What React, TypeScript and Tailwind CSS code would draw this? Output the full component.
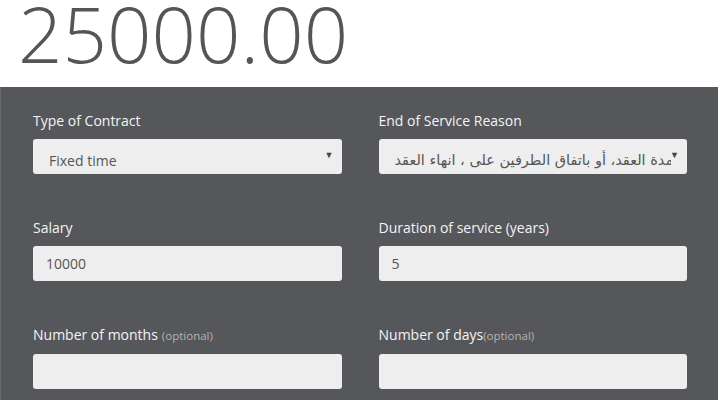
const font = { fontFamily: '"Open Sans", "Noto Sans", sans-serif' };

function Field({ label, optional, tight, children }: { label: string; optional?: boolean; tight?: boolean; children: React.ReactNode }) {
  return (
    <div className="flex flex-col">
      <label className="text-[14px] leading-5 text-[#f4f4f4]">
        {label}
        {optional && <span className={`text-[11.5px] text-[#b4b4b4] ${tight ? "" : "ml-1"}`}>(optional)</span>}
      </label>
      <div className="mt-2">{children}</div>
    </div>
  );
}

function FakeSelect({ children }: { children: React.ReactNode }) {
  return (
    <div className="relative flex h-[35px] items-center rounded-[3px] bg-[#eeeeee] pl-4 pr-[16px] pt-2 text-[14px] text-[#555555]">
      <div dir="ltr" className="min-w-0 flex-1 overflow-hidden whitespace-nowrap text-left">
        {children}
      </div>
      <span className="absolute right-[8px] top-[9px] text-[9px] text-[#444]">▼</span>
    </div>
  );
}

function TextBox({ value }: { value?: string }) {
  return (
    <input
      readOnly
      value={value ?? ""}
      className="h-[35px] w-full rounded-[3px] bg-[#eeeeee] px-[13px] text-[14px] text-[#555555] outline-none"
      style={font}
    />
  );
}

export default function App() {
  return (
    <div className="min-h-[400px] bg-white" style={font}>
      <div className="h-[87px] pl-[18px] text-[78px] font-light leading-[67px] text-[#555555]">25000.00</div>
      <div className="mr-[2px] min-h-[313px] border-l border-[#6a6b6e] bg-[#56575a] pl-[32px] pr-[31px] pt-6">
        <div className="grid grid-cols-2 gap-x-[37px] gap-y-11">
          <Field label="Type of Contract">
            <FakeSelect>Fixed time</FakeSelect>
          </Field>
          <Field label="End of Service Reason">
            <FakeSelect>
              <span dir="rtl" className="text-[14.5px]" style={{ fontFamily: '"DejaVu Sans", "Noto Sans", sans-serif' }}>
                انتهاء مدة العقد، أو باتفاق الطرفين على ، انهاء العقد
              </span>
            </FakeSelect>
          </Field>
          <Field label="Salary">
            <TextBox value="10000" />
          </Field>
          <Field label="Duration of service (years)">
            <TextBox value="5" />
          </Field>
          <Field label="Number of months" optional>
            <TextBox />
          </Field>
          <Field label="Number of days" optional tight>
            <TextBox />
          </Field>
        </div>
      </div>
    </div>
  );
}
